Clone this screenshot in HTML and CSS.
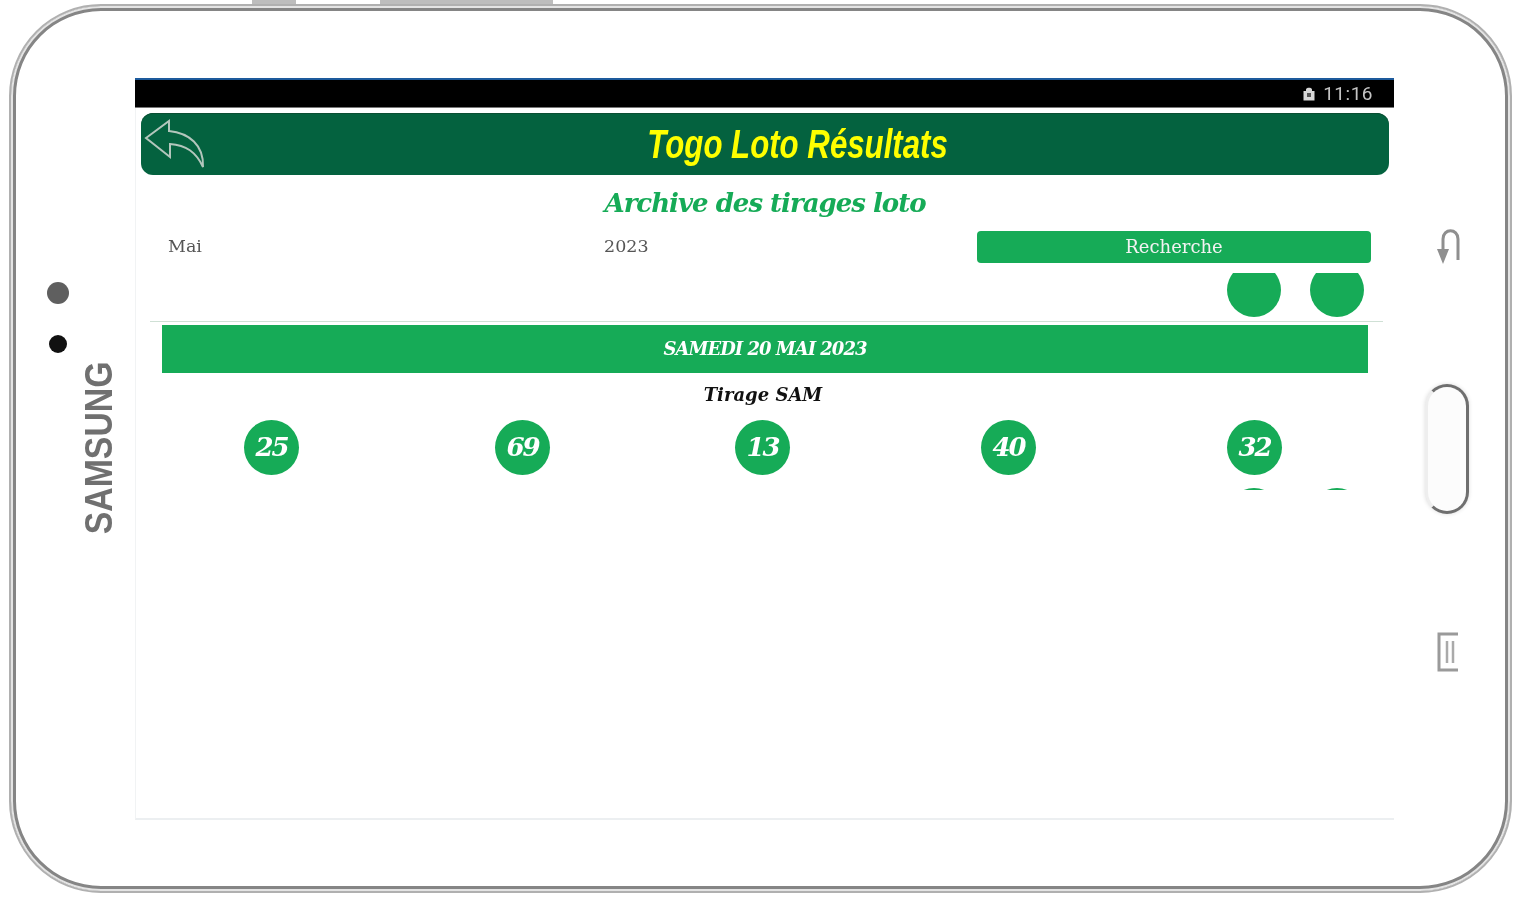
FILE: index.html
```html
<!DOCTYPE html>
<html lang="fr">
<head>
    <meta charset="UTF-8">
    <meta name="viewport" content="width=device-width, initial-scale=1.0">
    <title>Togo Loto Résultats</title>
    <link rel="stylesheet" href="styles.css">
</head>
<body>
    <div class="tablet">
        <span class="side-key key-small"></span>
        <span class="side-key key-large"></span>

        <div class="bezel-left">
            <div class="dots">
                <span class="dot dot-grey"></span>
                <span class="dot dot-black"></span>
            </div>
            <div class="brand">SAMSUNG</div>
        </div>

        <div class="screen">
            <div class="status-bar">
                <svg class="status-lock" viewBox="0 0 12 15">
                    <path d="M3 5V3.500C3 1 9 1 9 3.500V5H11.500V14.500H.5V5Z" fill="#d8d8d8"/>
                    <rect x="4" y="7" width="4" height="4" fill="#555"/>
                </svg>
                <span class="status-time">11:16</span>
            </div>

            <div class="app-header">
                <svg class="back-icon" viewBox="0 0 62 50">
                    <path d="M2 19L25 2V12C45 14 60 26 59 48C52 33 42 26 26 25V38Z" fill="none" stroke="#b3c6bc" stroke-width="2"/>
                </svg>
                <h1 class="app-title"><span class="app-title-text">Togo Loto Résultats</span></h1>
            </div>

            <h2 class="page-title">Archive des tirages loto</h2>

            <div class="search-row">
                <span class="select-label">Mai</span>
                <span class="select-label">2023</span>
                <button class="search-button">Recherche</button>
            </div>

            <div class="circle-row circle-row-top">
                <span class="circle"></span>
                <span class="circle"></span>
            </div>
            <div class="separator"></div>

            <div class="date-bar">SAMEDI 20 MAI 2023</div>
            <div class="draw-name">Tirage SAM</div>

            <div class="balls">
                <span class="ball">25</span>
                <span class="ball">69</span>
                <span class="ball">13</span>
                <span class="ball">40</span>
                <span class="ball">32</span>
            </div>

            <div class="circle-row circle-row-bottom">
                <span class="circle"></span>
                <span class="circle"></span>
            </div>
        </div>

        <div class="bezel-right">
            <svg class="nav-back" viewBox="0 0 26 36">
                <path d="M6 22V10C6 -1 21 -1 21 10V31" fill="none" stroke="#8f8f8f" stroke-width="3"/>
                <path d="M0 20H12L6 35Z" fill="#8f8f8f"/>
            </svg>
            <div class="home-button"></div>
            <svg class="nav-menu" viewBox="0 0 22 40">
                <path d="M21 2H2V38H21" fill="none" stroke="#9a9a9a" stroke-width="3"/>
                <path d="M10 9V31M16 9V31" fill="none" stroke="#aaa" stroke-width="2.500"/>
            </svg>
        </div>
    </div>
</body>
</html>
```

FILE: styles.css
```css
html, body {
    margin: 0;
    height: 900px;
    overflow: hidden;
    background-color: #fff;
}
body {
    padding: 4px 14px 7px 9px;
    box-sizing: border-box;
}
.tablet {
    position: relative;
    display: flex;
    height: 100%;
    box-sizing: border-box;
    border: 2px solid #b0b0b0;
    border-radius: 92px;
    box-shadow: inset 0 0 0 2px #e4e4e4, inset 0 0 0 5px #858585;
    filter: blur(0.7px);
}
.side-key {
    position: absolute;
    top: -6px;
    height: 4px;
    background-color: #bdbdbd;
}
.key-small {
    left: 241px;
    width: 44px;
}
.key-large {
    left: 369px;
    width: 173px;
}

/* left side of the tablet */
.bezel-left {
    display: flex;
    width: 124px;
    flex-shrink: 0;
    box-sizing: border-box;
    padding-left: 36px;
}
.dots {
    display: flex;
    flex-direction: column;
    align-items: center;
    width: 22px;
    padding-top: 276px;
}
.dot {
    border-radius: 50%;
}
.dot-grey {
    width: 22px;
    height: 22px;
    background-color: #5f5f5f;
}
.dot-black {
    width: 18px;
    height: 18px;
    margin-top: 31px;
    background-color: #111;
}
.brand {
    margin: 345px 0 0 16px;
    height: 194px;
    writing-mode: vertical-rl;
    transform: rotate(180deg) scaleY(0.89);
    font-family: "Liberation Sans", Arial, sans-serif;
    font-size: 38px;
    font-weight: bold;
    line-height: 28px;
    color: #707070;
}

/* screen */
.screen {
    width: 1259px;
    height: 742px;
    flex-shrink: 0;
    margin-top: 72px;
    box-sizing: border-box;
    border-left: 1px solid #f1f3f4;
    border-bottom: 2px solid #eceff1;
    font-family: "DejaVu Serif", serif;
}
.status-bar {
    display: flex;
    justify-content: flex-end;
    align-items: center;
    gap: 8px;
    height: 30px;
    margin-left: -1px;
    box-sizing: border-box;
    padding-right: 21px;
    background-color: #000;
    border-top: 2px solid #1d5a9c;
    border-bottom: 1px solid #777;
}
.status-lock {
    width: 12px;
    height: 15px;
}
.status-time {
    font-family: Roboto, sans-serif;
    font-size: 19px;
    letter-spacing: 0.5px;
    color: #c4c4c4;
}
.app-header {
    display: flex;
    align-items: center;
    height: 62px;
    margin: 5px 5px 0 5px;
    padding-left: 3px;
    background-color: #04623f;
    border-radius: 12px;
    box-shadow: inset 0 1px 0 #0a4f33;
}
.back-icon {
    width: 62px;
    height: 50px;
    flex-shrink: 0;
}
.app-title {
    flex: 1;
    margin: 0;
    text-align: center;
    font-family: "Liberation Sans", sans-serif;
    font-size: 40px;
    font-style: italic;
    font-weight: bold;
    color: #ffff00;
}
/* no condensed face installed, so squeeze the normal one */
.app-title-text {
    display: inline-block;
    transform: scaleX(0.78);
}
.page-title {
    margin: 12px 0 0;
    height: 32px;
    line-height: 32px;
    text-align: center;
    font-size: 26px;
    font-style: italic;
    font-weight: bold;
    letter-spacing: -1px;
    color: #16ab57;
}
.search-row {
    display: grid;
    grid-template-columns: 436px 373px 394px;
    align-items: center;
    height: 32px;
    margin-top: 12px;
    padding-left: 32px;
}
.select-label {
    padding-bottom: 2px;
    font-size: 17.500px;
    color: #555;
}
.search-button {
    height: 32px;
    padding: 0 0 2px;
    border: none;
    border-radius: 4px;
    background-color: #16ab57;
    color: #f2f2f2;
    font-family: "DejaVu Serif", serif;
    font-size: 18px;
    cursor: pointer;
}
.circle-row {
    display: flex;
    justify-content: flex-end;
    gap: 29px;
    padding-right: 30px;
    overflow: hidden;
}
.circle-row-top {
    align-items: flex-end;
    height: 44px;
    margin-top: 10px;
}
.circle-row-bottom {
    align-items: flex-start;
    height: 2px;
    margin-top: 13px;
}
.circle {
    width: 54px;
    height: 54px;
    flex-shrink: 0;
    border-radius: 50%;
    background-color: #16ab57;
}
.separator {
    height: 1px;
    margin: 4px 11px 0 14px;
    background-color: #cfe0d5;
}
.date-bar {
    height: 48px;
    line-height: 48px;
    margin: 3px 26px 0 26px;
    background-color: #16ab57;
    text-align: center;
    font-size: 18px;
    font-style: italic;
    font-weight: bold;
    letter-spacing: -1px;
    color: #fff;
}
.draw-name {
    height: 24px;
    line-height: 24px;
    margin-top: 10px;
    padding-right: 4px;
    text-align: center;
    font-size: 18px;
    font-style: italic;
    font-weight: bold;
    color: #111;
}
.balls {
    display: grid;
    grid-template-columns: 251px 240px 246px 246px 55px;
    margin-top: 13px;
    padding-left: 108px;
}
.ball {
    width: 55px;
    height: 55px;
    line-height: 55px;
    border-radius: 50%;
    background-color: #16ab57;
    text-align: center;
    font-size: 26px;
    font-style: italic;
    font-weight: bold;
    letter-spacing: -2px;
    color: #fff;
}

/* right side of the tablet */
.bezel-right {
    display: flex;
    flex-direction: column;
    flex: 1;
    padding: 223px 0 0 43px;
}
.nav-back {
    width: 26px;
    height: 36px;
}
.home-button {
    width: 44px;
    height: 130px;
    margin: 119px 0 0 -12px;
    box-sizing: border-box;
    border: 3px solid #6f6f6f;
    border-left-color: #eee;
    border-radius: 22px;
    background-color: #fcfcfc;
    box-shadow: 0 0 4px #ddd;
}
.nav-menu {
    width: 22px;
    height: 40px;
    margin-top: 118px;
}
```
